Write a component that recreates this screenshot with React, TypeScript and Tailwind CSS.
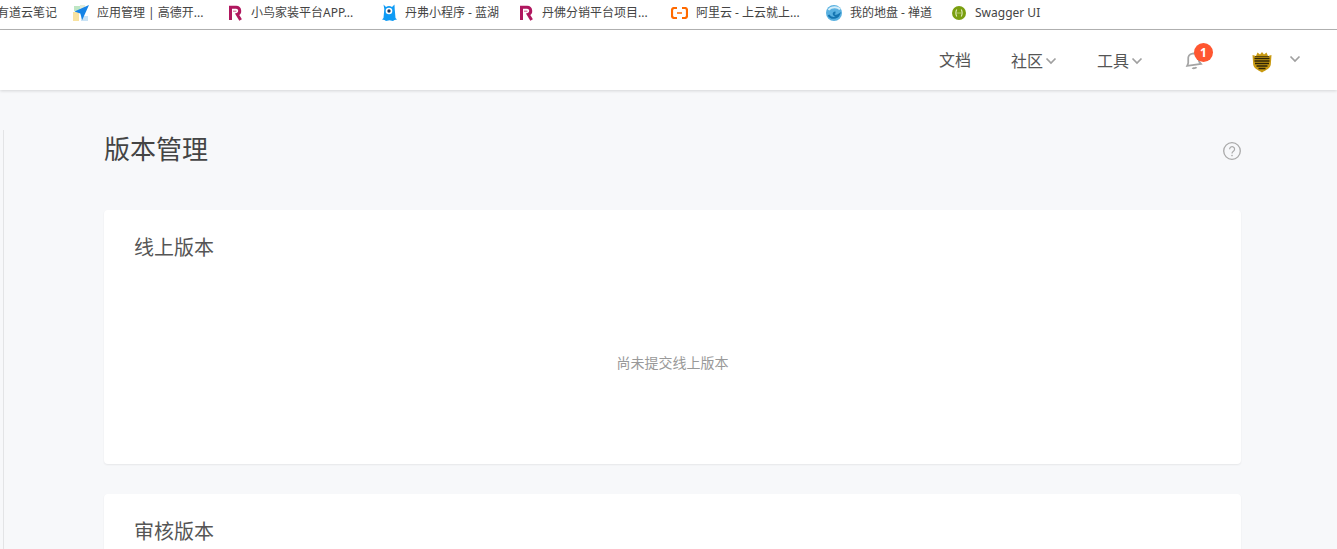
const font = { fontFamily: '"Noto Sans", "Noto Sans CJK SC", sans-serif' };

function RIcon() {
    return (
        <svg width="14" height="16" viewBox="0 0 14 16" className="shrink-0">
            <path d="M2.500 15V2.200h5.700a3.700 3.700 0 0 1 1 7.200L12.600 15" fill="none" stroke="#b0175f" strokeWidth="3" />
            <path d="M5 6.200h3.400" stroke="#d9709f" strokeWidth="1.200" />
        </svg>
    );
}

function MapIcon() {
    return (
        <svg width="16" height="16" viewBox="0 0 16 16" className="shrink-0">
            <rect x="1" y="1" width="6" height="5" fill="#bfe6c4" />
            <rect x="7" y="0" width="5" height="4" fill="#e4ecd8" />
            <rect x="0" y="7" width="6" height="9" fill="#f8e2a0" />
            <rect x="8" y="11" width="7" height="5" fill="#c8e2f5" />
            <path d="M16 0 1.500 6.500l5.800 2 1.900 6.500z" fill="#1583e6" />
        </svg>
    );
}

function BlueMonster() {
    return (
        <svg width="16" height="17" viewBox="0 0 16 17" className="shrink-0">
            <path d="M2.500 0.500 5 3a5.500 5.500 0 0 1 6 0l2.500-2.500.2 4.500.8 9 1.500 1.500-2.500.5-1.500 1-3.500-.7-3.500.7-1.500-1-2.500-.5 1.500-1.500.8-9z" fill="#0f9bf5" />
            <circle cx="8" cy="7" r="3.300" fill="#fff" />
            <circle cx="8" cy="7" r="1.700" fill="#203a5c" />
        </svg>
    );
}

function AliyunIcon() {
    return (
        <svg width="17" height="12" viewBox="0 0 17 12" className="shrink-0">
            <path d="M6 1H3.200A2.200 2.200 0 0 0 1 3.200v5.600A2.200 2.200 0 0 0 3.200 11H6M11 1h2.800A2.200 2.200 0 0 1 16 3.200v5.600a2.200 2.200 0 0 1-2.200 2.200H11" fill="none" stroke="#ff6a00" strokeWidth="2.200" />
            <path d="M6 6h5" stroke="#ff6a00" strokeWidth="1.500" />
        </svg>
    );
}

function GlobeIcon() {
    return (
        <svg width="16" height="16" viewBox="0 0 16 16" className="shrink-0">
            <circle cx="8" cy="8" r="8" fill="#58b0e0" />
            <path d="M2.500 5C5.500 1.200 12 1.500 14 4.500" fill="none" stroke="#d4eefa" strokeWidth="2" />
            <path d="M2.500 10c2.200 4 8.500 3.800 10.500-.5-2 1.300-4 1.300-5 .3-1-1-.2-2.300 1.500-2.300" fill="none" stroke="#1474b0" strokeWidth="1.800" />
        </svg>
    );
}

function SwaggerIcon() {
    return (
        <svg width="14" height="14" viewBox="0 0 14 14" className="shrink-0">
            <circle cx="7" cy="7" r="7" fill="#7a9f10" />
            <path d="M4.800 3.500C3.600 5 3.600 9 4.800 10.500M9.200 3.500c1.200 1.500 1.200 5.500 0 7" fill="none" stroke="#e6efc8" strokeWidth="1.100" />
            <path d="M5.500 7h3" stroke="#e6efc8" strokeWidth="1.100" strokeDasharray="1 1" />
        </svg>
    );
}

function Chevron() {
    return (
        <svg width="12" height="8" viewBox="0 0 12 8" className="shrink-0">
            <path d="M1.500 1.500 6 6l4.500-4.500" fill="none" stroke="#a0a0a0" strokeWidth="1.700" />
        </svg>
    );
}

function Shield() {
    return (
        <svg width="20" height="22" viewBox="0 0 20 22">
            <path d="M0.500 4 4 5l1.500-3.500L8 3.500 10 1l2 2.500L14.500 1.500 16 5l3.500-1-.7 9.500c-.4 3.500-4.500 5.500-8.800 8C5.700 19 1.600 17 1.200 13.500z" fill="#c99a12" />
            <path d="M2.500 7.500h15M2.500 10h15M3 12.500h14M4.500 15h11M6.500 17.500h7" stroke="#2e2407" strokeWidth="1.300" />
            <path d="M3 5.500h14" stroke="#5f4a0c" strokeWidth="1" />
        </svg>
    );
}

export default function App() {
    return (
        <div className="h-[549px] overflow-hidden bg-[#f7f8fa]" style={font}>
            <div className="h-[30px] flex items-center pb-1 bg-white border-b border-[#b4b4b4] text-[12px] text-[#444] whitespace-nowrap overflow-hidden">
                <span className="-ml-[3px] w-[60px]">有道云笔记</span>
                <div className="ml-4 flex items-center gap-2"><MapIcon /><span className="w-[106px]">应用管理 | 高德开...</span></div>
                <div className="ml-[25px] flex items-center gap-[9px]"><RIcon /><span className="w-[106px]">小鸟家装平台APP...</span></div>
                <div className="ml-6 flex items-center gap-2"><BlueMonster /><span className="w-[96px]">丹弗小程序 - 蓝湖</span></div>
                <div className="ml-[18px] flex items-center gap-[9px]"><RIcon /><span className="w-[106px]">丹佛分销平台项目...</span></div>
                <div className="ml-[23px] flex items-center gap-2"><AliyunIcon /><span className="w-[107px]">阿里云 - 上云就上...</span></div>
                <div className="ml-[23px] flex items-center gap-2"><GlobeIcon /><span className="w-[85px]">我的地盘 - 禅道</span></div>
                <div className="ml-[17px] flex items-center gap-[9px]"><SwaggerIcon /><span>Swagger UI</span></div>
            </div>

            <header className="relative h-[60px] flex items-center bg-white shadow-[0_1px_3px_rgba(0,0,0,0.14)] text-[16px] text-[#555]">
                <span className="ml-[939px]">文档</span>
                <div className="ml-10 flex items-center gap-0.5 pt-0.5"><span>社区</span><Chevron /></div>
                <div className="ml-10 flex items-center gap-0.5 pt-0.5"><span>工具</span><Chevron /></div>
                <div className="relative ml-[42px] w-4 h-5">
                    <svg width="17" height="18" viewBox="0 0 17 18" className="mt-0.5 -rotate-[8deg]">
                        <path d="M8.500 1.500c-3 0-5 2.200-5 5.200 0 3.300-.8 5-2 6.300h14c-1.200-1.300-2-3-2-6.300 0-3-2-5.200-5-5.200zM6.500 15.500c.5 1 3.500 1 4 0" fill="none" stroke="#a4a4a4" strokeWidth="1.800" />
                    </svg>
                    <span className="absolute left-[9px] -top-[7px] w-[19px] h-[19px] rounded-full bg-[#ff5630] text-white text-[12px] font-bold flex items-center justify-center leading-none">1</span>
                </div>
                <div className="ml-[51px] mt-1"><Shield /></div>
                <div className="ml-[17px] -mt-0.5"><Chevron /></div>
            </header>

            <div className="flex">
                <div className="ml-[3px] mt-10 w-px h-[419px] bg-[#e3e4e6]" />
                <main className="ml-[100px] w-[1137px] pt-[35px]">
                    <div className="flex items-center justify-between h-[48px]">
                        <h1 className="text-[26px] text-[#444] leading-none">版本管理</h1>
                        <svg width="18" height="18" viewBox="0 0 18 18" className="mt-1">
                            <circle cx="9" cy="9" r="8.300" fill="none" stroke="#a9a9a9" strokeWidth="1.300" />
                            <path d="M6.600 7.200A2.500 2.500 0 1 1 10.400 9.300C9.400 9.900 9 10.300 9 11.500" fill="none" stroke="#a9a9a9" strokeWidth="1.200" />
                            <circle cx="9" cy="13.600" r="0.800" fill="#a9a9a9" />
                        </svg>
                    </div>
                    <section className="mt-[37px] h-[254px] rounded bg-white shadow-[0_1px_2px_rgba(0,0,0,0.07)] pl-[30px] pr-[31px] pt-[22px] flex flex-col">
                        <h2 className="text-[20px] leading-8 text-[#555]">线上版本</h2>
                        <p className="mt-[89px] pl-px text-center text-[14px] leading-5 text-[#999]">尚未提交线上版本</p>
                    </section>
                    <section className="mt-[30px] h-[200px] rounded bg-white shadow-[0_1px_2px_rgba(0,0,0,0.07)] pl-[30px] pr-[31px] pt-[22px]">
                        <h2 className="text-[20px] leading-8 text-[#555]">审核版本</h2>
                    </section>
                </main>
            </div>
        </div>
    );
}
